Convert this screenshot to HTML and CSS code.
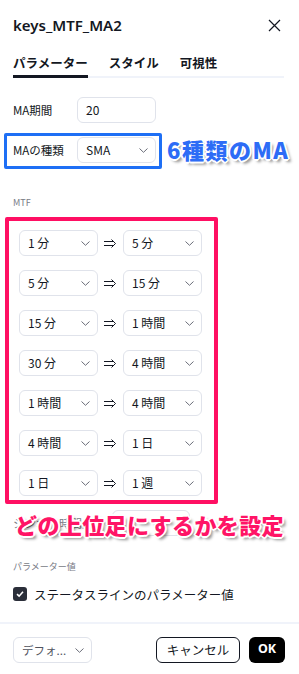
FILE: index.html
```html
<!DOCTYPE html>
<html lang="ja">
    <head>
        <meta charset="utf-8">
        <link rel="stylesheet" href="styles.css">
    </head>
    <body>
        <div class="dialog">
            <div class="header">
                <span class="title">keys_MTF_MA2</span>
                <svg class="close" width="13" height="13" viewBox="0 0 13 13"><path d="M1 1L12 12M12 1L1 12" stroke="#131722" stroke-width="1.2" fill="none"/></svg>
            </div>
            <div class="tabs">
                <span class="tab active">パラメーター</span>
                <span class="tab">スタイル</span>
                <span class="tab">可視性</span>
            </div>

            <div class="form">
                <div class="row">
                    <span class="label">MA期間</span>
                    <div class="field">20</div>
                </div>
                <div class="row">
                    <span class="label">MAの種類</span>
                    <div class="field select">SMA<svg class="chev" width="9" height="5" viewBox="0 0 9 5"><path d="M0.5 0.5L4.5 4.3L8.5 0.5" stroke="#6a6d78" fill="none"/></svg></div>
                </div>

                <div class="group">MTF</div>
                <div class="mtf">
                    <div class="pair"><div class="field select">1 分<svg class="chev" width="9" height="5" viewBox="0 0 9 5"><path d="M0.5 0.5L4.5 4.3L8.5 0.5" stroke="#6a6d78" fill="none"/></svg></div><svg class="arrow" width="13" height="9" viewBox="0 0 13 9"><path d="M0 2.5H10M0 6.5H10M7.5 0.5L11.5 4.5L7.5 8.5" stroke="#131722" fill="none"/></svg><div class="field select">5 分<svg class="chev" width="9" height="5" viewBox="0 0 9 5"><path d="M0.5 0.5L4.5 4.3L8.5 0.5" stroke="#6a6d78" fill="none"/></svg></div></div>
                    <div class="pair"><div class="field select">5 分<svg class="chev" width="9" height="5" viewBox="0 0 9 5"><path d="M0.5 0.5L4.5 4.3L8.5 0.5" stroke="#6a6d78" fill="none"/></svg></div><svg class="arrow" width="13" height="9" viewBox="0 0 13 9"><path d="M0 2.5H10M0 6.5H10M7.5 0.5L11.5 4.5L7.5 8.5" stroke="#131722" fill="none"/></svg><div class="field select">15 分<svg class="chev" width="9" height="5" viewBox="0 0 9 5"><path d="M0.5 0.5L4.5 4.3L8.5 0.5" stroke="#6a6d78" fill="none"/></svg></div></div>
                    <div class="pair"><div class="field select">15 分<svg class="chev" width="9" height="5" viewBox="0 0 9 5"><path d="M0.5 0.5L4.5 4.3L8.5 0.5" stroke="#6a6d78" fill="none"/></svg></div><svg class="arrow" width="13" height="9" viewBox="0 0 13 9"><path d="M0 2.5H10M0 6.5H10M7.5 0.5L11.5 4.5L7.5 8.5" stroke="#131722" fill="none"/></svg><div class="field select">1 時間<svg class="chev" width="9" height="5" viewBox="0 0 9 5"><path d="M0.5 0.5L4.5 4.3L8.5 0.5" stroke="#6a6d78" fill="none"/></svg></div></div>
                    <div class="pair"><div class="field select">30 分<svg class="chev" width="9" height="5" viewBox="0 0 9 5"><path d="M0.5 0.5L4.5 4.3L8.5 0.5" stroke="#6a6d78" fill="none"/></svg></div><svg class="arrow" width="13" height="9" viewBox="0 0 13 9"><path d="M0 2.5H10M0 6.5H10M7.5 0.5L11.5 4.5L7.5 8.5" stroke="#131722" fill="none"/></svg><div class="field select">4 時間<svg class="chev" width="9" height="5" viewBox="0 0 9 5"><path d="M0.5 0.5L4.5 4.3L8.5 0.5" stroke="#6a6d78" fill="none"/></svg></div></div>
                    <div class="pair"><div class="field select">1 時間<svg class="chev" width="9" height="5" viewBox="0 0 9 5"><path d="M0.5 0.5L4.5 4.3L8.5 0.5" stroke="#6a6d78" fill="none"/></svg></div><svg class="arrow" width="13" height="9" viewBox="0 0 13 9"><path d="M0 2.5H10M0 6.5H10M7.5 0.5L11.5 4.5L7.5 8.5" stroke="#131722" fill="none"/></svg><div class="field select">4 時間<svg class="chev" width="9" height="5" viewBox="0 0 9 5"><path d="M0.5 0.5L4.5 4.3L8.5 0.5" stroke="#6a6d78" fill="none"/></svg></div></div>
                    <div class="pair"><div class="field select">4 時間<svg class="chev" width="9" height="5" viewBox="0 0 9 5"><path d="M0.5 0.5L4.5 4.3L8.5 0.5" stroke="#6a6d78" fill="none"/></svg></div><svg class="arrow" width="13" height="9" viewBox="0 0 13 9"><path d="M0 2.5H10M0 6.5H10M7.5 0.5L11.5 4.5L7.5 8.5" stroke="#131722" fill="none"/></svg><div class="field select">1 日<svg class="chev" width="9" height="5" viewBox="0 0 9 5"><path d="M0.5 0.5L4.5 4.3L8.5 0.5" stroke="#6a6d78" fill="none"/></svg></div></div>
                    <div class="pair"><div class="field select">1 日<svg class="chev" width="9" height="5" viewBox="0 0 9 5"><path d="M0.5 0.5L4.5 4.3L8.5 0.5" stroke="#6a6d78" fill="none"/></svg></div><svg class="arrow" width="13" height="9" viewBox="0 0 13 9"><path d="M0 2.5H10M0 6.5H10M7.5 0.5L11.5 4.5L7.5 8.5" stroke="#131722" fill="none"/></svg><div class="field select">1 週<svg class="chev" width="9" height="5" viewBox="0 0 9 5"><path d="M0.5 0.5L4.5 4.3L8.5 0.5" stroke="#6a6d78" fill="none"/></svg></div></div>
                </div>
                <div class="row hidden-row">
                    <span class="label wide">シンボル時間足</span>
                    <div class="field short"></div>
                </div>

                <div class="group sub">パラメーター値</div>
                <div class="check-row">
                    <span class="check"><svg width="10" height="10" viewBox="0 0 10 10"><path d="M2 5.2L4.1 7.2L8 2.8" stroke="#fff" stroke-width="1.6" fill="none"/></svg></span>
                    <span>ステータスラインのパラメーター値</span>
                </div>
            </div>

            <div class="footer">
                <div class="field select small">デフォ...<svg class="chev" width="9" height="5" viewBox="0 0 9 5"><path d="M0.5 0.5L4.5 4.3L8.5 0.5" stroke="#6a6d78" fill="none"/></svg></div>
                <div class="buttons">
                    <span class="btn cancel">キャンセル</span>
                    <span class="btn ok">OK</span>
                </div>
            </div>

            <!-- annotations drawn over the screenshot -->
            <div class="mark blue-box"></div>
            <div class="note blue-note">6種類のMA</div>
            <div class="mark pink-box"></div>
            <div class="note pink-note">どの上位足にするかを設定</div>
        </div>
    </body>
</html>
```
FILE: styles.css
```css
*{
  margin: 0;
  padding: 0;
  box-sizing: border-box;
}

body{
  background: #fff;
  font-family: "Noto Sans CJK JP", "Noto Sans", sans-serif;
  color: #131722;
}

.dialog{
  width: 299px;
  height: 674px;
  position: relative;
  overflow: hidden;
}

.header{
  height: 50px;
  display: flex;
  align-items: center;
  justify-content: space-between;
  padding: 0 18px 0 13px;
}

.title{
  font-family: "Noto Sans", sans-serif;
  font-size: 15px;
  font-weight: 600;
}

.tabs{
  height: 28px;
  margin: 0 15px 0 13px;
  display: flex;
  gap: 21px;
  border-bottom: 2px solid #f0f3fa;
}

.tab{
  font-size: 12.5px;
  font-weight: 700;
  line-height: 18px;
  padding-top: 4px;
  height: 28px;
}

.tab.active{
  border-bottom: 3px solid #131722;
}

.form{
  padding: 19px 13px 0;
  display: flex;
  flex-direction: column;
}

.row{
  display: flex;
  align-items: center;
  height: 26px;
  margin-bottom: 14px;
}

.label{
  width: 64px;
  font-size: 11.5px;
}

.label.wide{
  width: 99px;
  color: #787b86;
}

.field{
  width: 79px;
  height: 26px;
  border: 1px solid #e0e3eb;
  border-radius: 6px;
  font-size: 12px;
  line-height: 24px;
  padding-left: 8px;
  position: relative;
  background: #fff;
  flex-shrink: 0;
}

.field.short{
  width: 78px;
}

.chev{
  position: absolute;
  right: 7px;
  top: 10px;
}

.group{
  font-size: 9px;
  color: #787b86;
  line-height: 14px;
  margin-top: 19px;
}

.mtf{
  margin-top: 20px;
  padding-left: 6px;
  display: flex;
  flex-direction: column;
  gap: 14px;
}

.pair{
  display: flex;
  align-items: center;
  height: 26px;
}

.arrow{
  margin: 0 6px 0 6px;
  flex-shrink: 0;
}

.hidden-row{
  margin-top: 14px;
}

.group.sub{
  margin-top: 10px;
}

.check-row{
  display: flex;
  align-items: center;
  gap: 7px;
  height: 20px;
  margin-top: 10px;
  font-size: 12.5px;
}

.check{
  width: 14px;
  height: 14px;
  border-radius: 3px;
  background: #2a2e39;
  display: flex;
  align-items: center;
  justify-content: center;
}

.footer{
  margin-top: 18px;
  border-top: 2px solid #f0f3fa;
  padding: 13px 14px 0 13px;
  display: flex;
  justify-content: space-between;
}

.field.small{
  font-size: 11.5px;
  color: #50535e;
}

.buttons{
  display: flex;
  gap: 9px;
}

.btn{
  height: 26px;
  border-radius: 6px;
  font-size: 12.5px;
  line-height: 24px;
  text-align: center;
}

.btn.cancel{
  width: 84px;
  border: 1px solid #131722;
}

.btn.ok{
  width: 36px;
  background: #000;
  color: #fff;
  font-weight: 700;
  font-family: "Noto Sans", sans-serif;
}

.mark{
  position: absolute;
  border-radius: 2px;
}

.blue-box{
  left: 4px;
  top: 133px;
  width: 158px;
  height: 36px;
  border: 3px solid #1e6ff5;
}

.pink-box{
  left: 5px;
  top: 217px;
  width: 213px;
  height: 287px;
  border: 4px solid #ff0f63;
}

.note{
  position: absolute;
  font-weight: 900;
  white-space: nowrap;
  text-shadow: -1px -1px 0 #fff, 1px -1px 0 #fff, -1px 1px 0 #fff, 1px 1px 0 #fff,
    0 -2px 0 #fff, 0 2px 0 #fff, -2px 0 0 #fff, 2px 0 0 #fff,
    3px 3px 3px rgba(0, 0, 0, 0.45);
}

.blue-note{
  left: 167px;
  top: 133px;
  font-size: 22px;
  letter-spacing: 1.5px;
  line-height: 32px;
  color: #2d6cf6;
}

.pink-note{
  left: 15px;
  top: 508px;
  font-size: 22px;
  letter-spacing: 0.4px;
  line-height: 32px;
  color: #ff1466;
}
```
